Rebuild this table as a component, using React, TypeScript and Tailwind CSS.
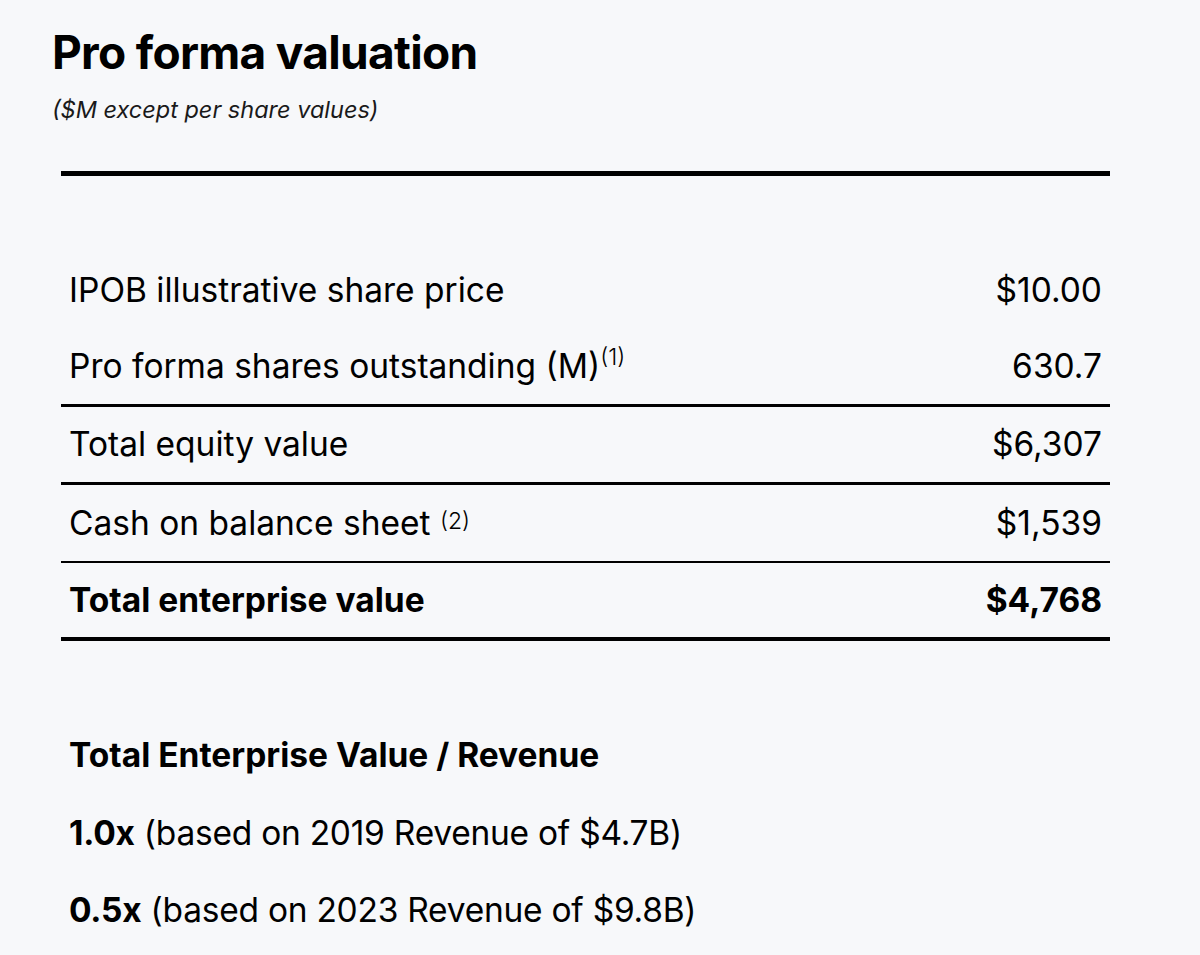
export default function App() {
  const font = { fontFamily: 'Inter, "Noto Sans", sans-serif' };
  return (
    <div className="w-[1200px] h-[955px] bg-[#f7f8fa] text-black overflow-hidden" style={font}>
      <div className="pl-[52px] pt-[28px]">
        <h1 className="text-[46px] leading-[48px] font-bold tracking-[-0.015em]">Pro forma valuation</h1>
        <p className="mt-[20px] text-[23.5px] leading-[28px] italic text-[#1a1a1a]">($M except per share values)</p>
      </div>
      <div className="ml-[61px] w-[1049px] mt-[47px]">
        <div className="h-[5px] bg-black" />
        <div className="h-[76px]" />
        <div className="h-[76px] flex items-center justify-between px-[8px] text-[33.5px]">
          <span>IPOB illustrative share price</span>
          <span>$10.00</span>
        </div>
        <div className="h-[76px] flex items-center justify-between px-[8px] text-[33.5px]">
          <span>
            Pro forma shares outstanding (M)
            <sup className="text-[23px] font-light leading-none top-[-13px]">(1)</sup>
          </span>
          <span>630.7</span>
        </div>
        <div className="h-[3px] bg-black" />
        <div className="h-[75px] flex items-center justify-between px-[8px] text-[33.5px]">
          <span>Total equity value</span>
          <span>$6,307</span>
        </div>
        <div className="h-[3px] bg-black" />
        <div className="h-[76px] flex items-center justify-between px-[8px] text-[33.5px]">
          <span>
            Cash on balance sheet{' '}
            <sup className="text-[23px] font-light leading-none top-[-6px]">(2)</sup>
          </span>
          <span>$1,539</span>
        </div>
        <div className="h-[2px] bg-black" />
        <div className="h-[74px] flex items-center justify-between px-[8px] text-[33.5px] font-bold">
          <span>Total enterprise value</span>
          <span>$4,768</span>
        </div>
        <div className="h-[4px] bg-black" />
      </div>
      <div className="pl-[69px] mt-[96px] flex flex-col gap-[41.5px] text-[33.5px] leading-[36px]">
        <div className="font-bold">Total Enterprise Value / Revenue</div>
        <div className="tracking-[-0.25px]">
          <span className="font-bold">1.0x</span> (based on 2019 Revenue of $4.7B)
        </div>
        <div className="tracking-[-0.25px]">
          <span className="font-bold">0.5x</span> (based on 2023 Revenue of $9.8B)
        </div>
      </div>
    </div>
  );
}
